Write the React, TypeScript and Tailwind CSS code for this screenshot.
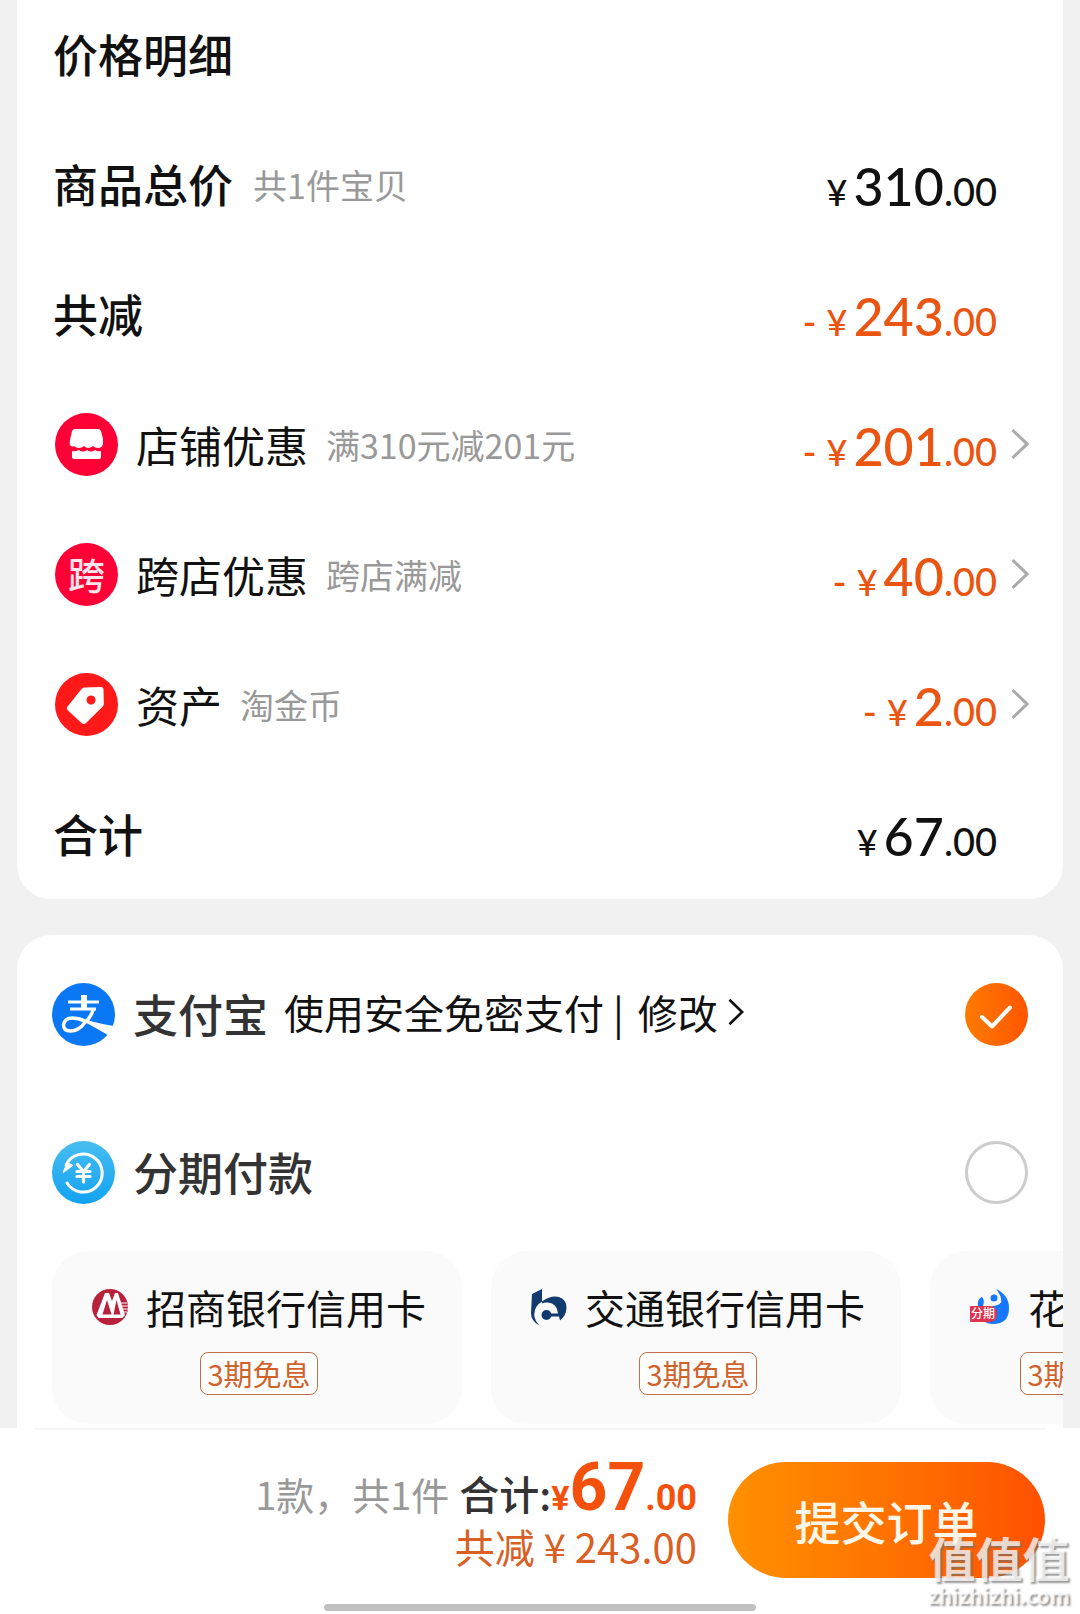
import { useId, type ReactNode } from "react";

type Deduction = {
  icon: ReactNode;
  name: string;
  note: string;
  amount: string;
};

type Plan = {
  icon: ReactNode;
  name: string;
};

function StoreIcon() {
  return (
    <svg viewBox="0 0 63 63" className="size-[63px] shrink-0" aria-hidden="true">
      <circle cx="31.5" cy="31.5" r="31.5" fill="#ff0036" />
      <path
        d="M20 16h23q2 0 3 2l2 8v5q-1 4-5 4-3 0-5-2-2 2-5 2-2 0-4-2-2 2-5 2-3 0-5-2-1 1-3 0-2-1-1-6l2-9q1-2 3-2z"
        fill="#fff"
      />
      <path d="M17 38q3 1 7-1 4 3 8 0 4 3 8 0 3 2 6 1v6q0 2-2 2H19q-2 0-2-2z" fill="#fff" />
    </svg>
  );
}

function CrossIcon() {
  return (
    <span className="flex size-[63px] shrink-0 items-center justify-center rounded-full bg-[#ff0036] text-[37px] leading-none font-medium text-[#ffe4ec]">
      跨
    </span>
  );
}

function TagIcon() {
  return (
    <svg viewBox="0 0 63 63" className="size-[63px] shrink-0" aria-hidden="true">
      <circle cx="31.5" cy="31.5" r="31.5" fill="#ff1919" />
      <path
        fillRule="evenodd"
        d="M29 14.500l17-.5q2.500 0 2.500 2.500l.3 14q0 2-1 3L31 50q-2.500 2-4.500 0L13 37.500q-2.500-2.500 0-4.500l13.500-17q1-1.500 2.500-1.500zM36 22.500a4.500 4.500 0 1 0 .1 0z"
        fill="#fff"
      />
    </svg>
  );
}

function AlipayIcon() {
  return (
    <svg viewBox="0 0 63 63" className="size-[63px] shrink-0" aria-hidden="true">
      <circle cx="31.5" cy="31.5" r="31.5" fill="#0a78f5" />
      <g fill="none" stroke="#fff">
        <path d="M32 12v14" strokeWidth="6" />
        <path d="M16 19h31M18 26h26" strokeWidth="3" />
        <path d="M41.500 26q-3 9-9 14-6 8-14 8-7 0-7-6 1-7 9-7 6 0 12 3" strokeWidth="3.500" />
      </g>
      <path d="M27 34q13 5.500 34.500 9l-1.500 4-4 5q-14-8-27-15z" fill="#fff" />
    </svg>
  );
}

function InstallmentIcon() {
  return (
    <svg viewBox="0 0 63 63" className="size-[63px] shrink-0" aria-hidden="true">
      <defs>
        <linearGradient id="sky" x1="0" y1="0" x2="0" y2="1">
          <stop offset="0" stopColor="#48bdf0" />
          <stop offset="1" stopColor="#12a2f2" />
        </linearGradient>
      </defs>
      <circle cx="31.5" cy="31.5" r="31.5" fill="url(#sky)" />
      <g fill="none" stroke="#fff" strokeLinecap="round">
        <path d="M14 24a19 19 0 1 1 1 18" strokeWidth="3" />
        <path d="M25.500 23.500l6 7 6-7M31.500 30.500V41M25 30.500h13M25 35.500h13" strokeWidth="3.200" />
      </g>
      <path d="M11.500 31l4-9 5 2.500z" fill="#fff" stroke="#fff" strokeWidth="1.500" strokeLinejoin="round" />
    </svg>
  );
}

function MerchantsBankLogo() {
  return (
    <svg viewBox="0 0 36 36" className="size-9 shrink-0" aria-hidden="true">
      <circle cx="18" cy="18" r="18" fill="#b9203b" />
      <path d="M29 14h6M29 17h7M30 20h6M31 23h4" stroke="#fff" strokeWidth="1.200" />
      <path d="M4.500 26L13 4h4l3 8 3-8h3l7 22-2.500 3h-24z" fill="#fff" />
      <path d="M10.500 25.500L15 11l4.500 14.500zM21.500 25.500L24.500 11 28.500 25.500z" fill="#b9203b" />
    </svg>
  );
}

function CommunicationsBankLogo() {
  return (
    <svg viewBox="0 0 36 36" className="size-9 shrink-0" aria-hidden="true">
      <g fill="#123a6e">
        <path d="M1 5l10-5v12.500Q2 18 3.500 28q1 5 5 8.500Q0 32 0 24z" />
        <path d="M11 12.500Q20 6 28 8q8 3 7.500 11-.5 8-6.500 12.500l-1-4H16v-3h11q-1-10-10-11-3.500-.3-6 1z" />
        <circle cx="15.500" cy="26" r="5" />
      </g>
    </svg>
  );
}

function HuabeiLogo() {
  return (
    <svg viewBox="0 0 40 36" className="h-9 w-10 shrink-0" aria-hidden="true">
      <g fill="#1677ff">
        <path d="M26 0q13 6 13 19 0 16-16 16-6 0-9-3l9-16q5 1 8-3 1-6-5-13z" />
        <circle cx="24" cy="9" r="3.500" />
        <path d="M8 17q-1-7 4-9 3 3 1 9z" />
      </g>
      <path d="M17 15q8 3 14-3" fill="none" stroke="#fafafa" strokeWidth="2" />
      <path d="M1 17h18q8 0 8 8t-8 8H1q-1 0-1-1V18q0-1 1-1z" fill="#df3350" />
      <text x="1" y="29" fontSize="12" fontWeight="500" fill="#fff">
        分期
      </text>
    </svg>
  );
}

function Chevron({ className }: { className: string }) {
  return (
    <svg
      viewBox="0 0 18 32"
      className={className}
      fill="none"
      stroke="currentColor"
      strokeWidth="3"
      aria-hidden="true"
    >
      <path d="M1.500 2L16 16 1.500 30" />
    </svg>
  );
}

function Price({ amount, minus = false }: { amount: string; minus?: boolean }) {
  return (
    <span className="ml-auto flex items-baseline pt-1 font-[Lato,sans-serif] text-[52px] font-medium">
      {minus && <span className="mr-2.5 text-[38px]">-</span>}
      <span className="mr-1.5 text-[36px]">¥</span>
      {amount}
      <span className="text-[38px]">.00</span>
    </span>
  );
}

const deductions: Deduction[] = [
  { icon: <StoreIcon />, name: "店铺优惠", note: "满310元减201元", amount: "201" },
  { icon: <CrossIcon />, name: "跨店优惠", note: "跨店满减", amount: "40" },
  { icon: <TagIcon />, name: "资产", note: "淘金币", amount: "2" },
];

const plans: Plan[] = [
  { icon: <MerchantsBankLogo />, name: "招商银行信用卡" },
  { icon: <CommunicationsBankLogo />, name: "交通银行信用卡" },
  { icon: <HuabeiLogo />, name: "花呗分期" },
];

function PriceDetails() {
  return (
    <section className="mx-[17px] rounded-b-[34px] bg-white pl-9 pr-[34px] text-[#111]">
      <h2 className="flex h-[119px] items-center pb-3 text-[45px] font-medium">价格明细</h2>
      <div className="flex h-[130px] items-center pr-8">
        <span className="text-[45px] font-medium">商品总价</span>
        <span className="ml-5 text-[34px] text-[#999]">共1件宝贝</span>
        <Price amount="310" />
      </div>
      <div className="flex h-[130px] items-center pr-8">
        <span className="text-[45px] font-medium">共减</span>
        <span className="ml-auto text-[#eb5512]">
          <Price amount="243" minus />
        </span>
      </div>
      {deductions.map((d) => (
        <button key={d.name} className="flex h-[130px] w-full items-center pl-0.5 text-left">
          {d.icon}
          <span className="ml-[18px] text-[43px]">{d.name}</span>
          <span className="ml-[18px] text-[34px] text-[#999]">{d.note}</span>
          <span className="ml-auto text-[#eb5512]">
            <Price amount={d.amount} minus />
          </span>
          <Chevron className="ml-3.5 h-8 w-[18px] text-[#aaa]" />
        </button>
      ))}
      <div className="flex h-[130px] items-center pr-8">
        <span className="text-[45px] font-medium">合计</span>
        <Price amount="67" />
      </div>
    </section>
  );
}

function PayRadio({ id, checked = false }: { id: string; checked?: boolean }) {
  return (
    <span className="relative ml-auto size-[63px]">
      <input
        id={id}
        type="radio"
        name="payment"
        defaultChecked={checked}
        className="peer block size-[63px] appearance-none rounded-full border-[3px] border-[#ccc] checked:border-0 checked:bg-linear-to-r checked:from-[#ff7a00] checked:to-[#ff5500]"
      />
      <svg
        viewBox="0 0 63 63"
        className="pointer-events-none absolute inset-0 hidden peer-checked:block"
        fill="none"
        stroke="#fff"
        strokeWidth="4"
        strokeLinecap="round"
        strokeLinejoin="round"
        aria-hidden="true"
      >
        <path d="M17 34l10 9.500 18-19" />
      </svg>
    </span>
  );
}

function Payment() {
  const id = useId();

  return (
    <section className="mx-[17px] mt-9 overflow-hidden rounded-t-[34px] bg-white pb-1 pl-[35px]">
      <div className="flex h-[158px] items-center pr-[35px]">
        <AlipayIcon />
        <label htmlFor={id + "alipay"} className="ml-[18px] text-[45px] font-medium text-[#333]">
          支付宝
        </label>
        <span className="ml-4 pb-1 text-[40px] text-[#111]">使用安全免密支付 |</span>
        <a href="#edit" className="ml-3.5 flex items-center pb-1 text-[40px] text-[#111]">
          修改
          <Chevron className="ml-2.5 h-7 w-4" />
        </a>
        <PayRadio id={id + "alipay"} checked />
      </div>
      <div className="flex h-[158px] items-center pr-[35px]">
        <InstallmentIcon />
        <label htmlFor={id + "split"} className="ml-[18px] text-[45px] font-medium text-[#333]">
          分期付款
        </label>
        <PayRadio id={id + "split"} />
      </div>
      <div className="flex gap-[29px] overflow-hidden">
        {plans.map((plan) => (
          <button
            key={plan.name}
            className="flex h-[173px] shrink-0 flex-col items-center rounded-[36px] bg-[#fafafa] pt-[26px] pl-10 pr-9"
          >
            <span className="flex h-[60px] items-center gap-[18px] text-[40px] text-[#111]">
              {plan.icon}
              {plan.name}
            </span>
            <span className="mt-[15px] flex h-[43px] items-center rounded-lg border border-[#c0704a] bg-white px-1.5 text-[29px] text-[#d0622c]">
              3期免息
            </span>
          </button>
        ))}
      </div>
    </section>
  );
}

function CheckoutBar() {
  return (
    <footer className="relative mt-auto bg-white pb-[3px]">
      <div className="mx-[34px] h-0.5 bg-[#f6f6f6]" />
      <div className="flex items-start justify-end gap-[31px] pr-[35px] pt-8">
        <div className="flex flex-col items-end">
          <div className="flex h-[52px] items-baseline text-[40px] leading-[52px]">
            <span className="text-[38px] text-[#999]">1款，共1件</span>
            <span className="ml-2.5 font-medium text-[#333]">合计:</span>
            <span className="flex items-baseline font-[Roboto,sans-serif] font-bold text-[#f5500c]">
              <span className="text-[34px]">¥</span>
              <span className="text-[66px]">67</span>
              <span className="text-[36px]">.00</span>
            </span>
          </div>
          <div className="mt-1.5 text-[40px] leading-[52px] text-[#d95f25]">共减 ¥ 243.00</div>
        </div>
        <button className="h-[116px] w-[317px] rounded-full bg-linear-to-r from-[#ff9000] to-[#ff5000] text-[46px] font-medium text-[#fff6ea]">
          提交订单
        </button>
      </div>
      <div className="mx-auto mt-[26px] h-[7px] w-2/5 rounded-full bg-[#c1c1c1]" />
      <div className="pointer-events-none absolute right-2.5 bottom-1.5 flex flex-col items-center font-bold text-white/75 [text-shadow:2px_2px_2px_rgb(110_110_110/0.7)]">
        <span className="text-[47px] leading-[50px]">值值值</span>
        <span className="text-[21px] leading-[26px]">zhizhizhi.com</span>
      </div>
    </footer>
  );
}

export default function App() {
  return (
    <main className="flex min-h-screen flex-col bg-[#f1f1f1] font-['Noto_Sans_CJK_SC',sans-serif]">
      <PriceDetails />
      <Payment />
      <CheckoutBar />
    </main>
  );
}
